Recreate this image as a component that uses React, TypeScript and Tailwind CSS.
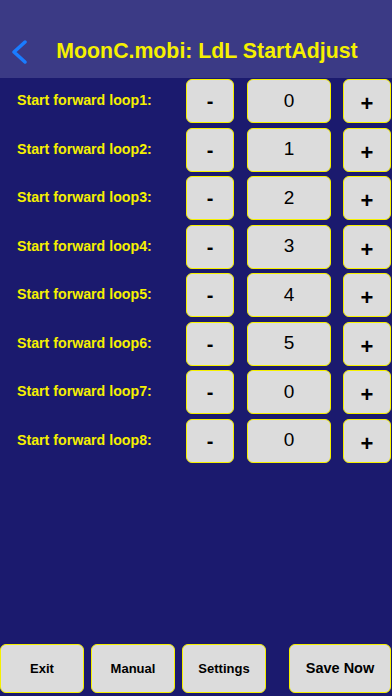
const values = [0, 1, 2, 3, 4, 5, 0, 0];

const btn =
  "flex items-center justify-center bg-[#dcdcdc] border-[1.5px] border-[#f5f000] rounded-[6px] text-black font-bold";

export default function App() {
  return (
    <div
      className="w-[392px] h-[696px] bg-[#1b1a6e] flex flex-col overflow-hidden"
      style={{ fontFamily: '"Liberation Sans", Arial, sans-serif' }}
    >
      {/* Header */}
      <div className="h-[78px] bg-[#3b3a85] relative flex items-center justify-center pt-[26px] shrink-0">
        <svg
          className="absolute left-[10px] top-[40px]"
          width="18"
          height="24"
          viewBox="0 0 18 24"
          fill="none"
        >
          <path d="M15 2 L4 12 L15 22" stroke="#1a7cff" strokeWidth="3.5" strokeLinecap="round" strokeLinejoin="round" />
        </svg>
        <span className="text-[21.3px] font-bold text-[#f5f000] ml-[22px]">MoonC.mobi: LdL StartAdjust</span>
      </div>

      {/* Rows */}
      <div className="flex flex-col gap-[4.5px] pt-[1px]">
        {values.map((v, i) => (
          <div key={i} className="flex items-center h-[44px]">
            <span className="flex-1 pl-[17px] text-[14.2px] font-bold text-[#f5f000]">
              Start forward loop{i + 1}:
            </span>
            <div className={`${btn} w-[48px] h-[44px] text-[20px]`}>-</div>
            <div className={`${btn} w-[84px] h-[44px] text-[19px] ml-[13px] !font-normal`}>{v}</div>
            <div className={`${btn} w-[48px] h-[44px] text-[22px] ml-[12px] mr-[1px] pt-[5px]`}>+</div>
          </div>
        ))}
      </div>

      {/* Bottom bar */}
      <div className="mt-auto flex items-center pb-[3px] h-[52px]">
        <div className={`${btn} w-[84px] h-[49px] text-[13px]`}>Exit</div>
        <div className={`${btn} w-[84px] h-[49px] text-[13px] ml-[7px]`}>Manual</div>
        <div className={`${btn} w-[84px] h-[49px] text-[13px] ml-[7px]`}>Settings</div>
        <div className={`${btn} w-[102px] h-[49px] text-[14.5px] ml-[23px]`}>Save Now</div>
      </div>
    </div>
  );
}
